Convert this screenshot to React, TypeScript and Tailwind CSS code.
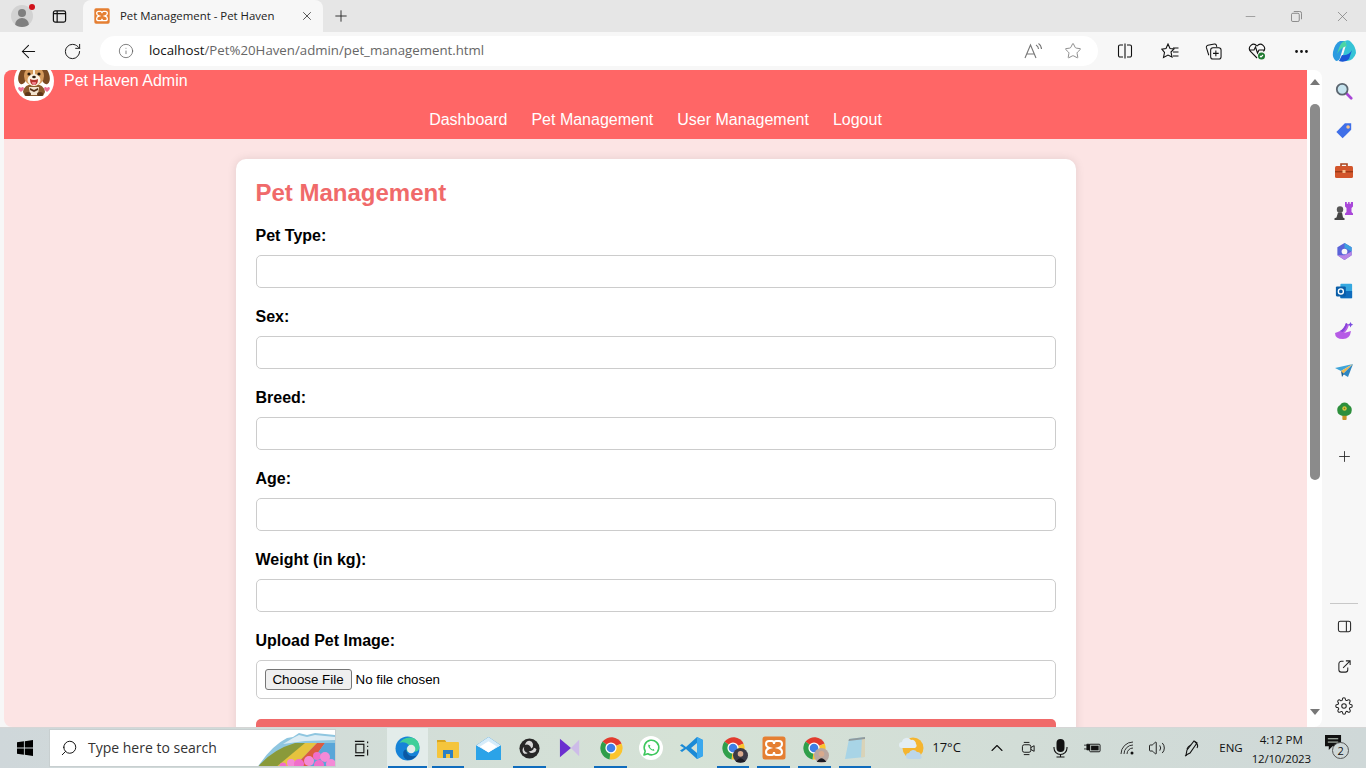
import React from "react";
import { ArrowLeft, RotateCw, Info, Star, X, Plus, Minus, Ellipsis, ChevronUp, Volume2, Search } from "lucide-react";

const ui = { fontFamily: '"Open Sans", "Noto Sans", sans-serif' };
const web = { fontFamily: '"Liberation Sans", Arial, sans-serif' };

function Dog() {
  return (
    <svg viewBox="0 0 40 40" className="w-10 h-10 shrink-0 -mt-[9px] rounded-full bg-white">
      <path d="M9 31 q1 -8 11 -8 q10 0 11 8 l-2 4 h-18z" fill="#8a5a2c" />
      <path d="M15 26 h10 l-1 8 h-8z" fill="#f2e3cf" />
      <ellipse cx="9" cy="15" rx="4.5" ry="8.5" fill="#7a4a22" transform="rotate(14 9 15)" />
      <ellipse cx="31" cy="15" rx="4.5" ry="8.5" fill="#7a4a22" transform="rotate(-14 31 15)" />
      <ellipse cx="20" cy="15" rx="10" ry="10" fill="#d59a5c" />
      <ellipse cx="20" cy="19" rx="6.5" ry="6" fill="#fbf1e2" />
      <path d="M19 6 h2 v8 h-2z" fill="#fbf1e2" />
      <circle cx="15" cy="13" r="1.6" fill="#2b1a0c" />
      <circle cx="25" cy="13" r="1.6" fill="#2b1a0c" />
      <ellipse cx="20" cy="16" rx="1.8" ry="1.3" fill="#2b1a0c" />
      <path d="M16 18 q4 2 8 0 q0 6 -4 6 q-4 0 -4 -6z" fill="#b5332e" />
      <path d="M18 21 h4 q0 3 -2 3 q-2 0 -2 -3z" fill="#ef7f8c" />
      <path d="M16 27 l4 2 l4 -2 v2 l-4 2 l-4 -2z" fill="#55301a" />
      <path d="M4 27 q1.5 -2 3 0 q1.5 -2 3 0 q0 2 -3 4 q-3 -2 -3 -4z" fill="#ee6f94" />
      <path d="M30 27 q1.5 -2 3 0 q1.5 -2 3 0 q0 2 -3 4 q-3 -2 -3 -4z" fill="#ee6f94" />
      <ellipse cx="14" cy="33" rx="3" ry="2" fill="#5d3619" />
      <ellipse cx="26" cy="33" rx="3" ry="2" fill="#5d3619" />
    </svg>
  );
}

function Xampp({ size }: { size: number }) {
  return (
    <svg viewBox="0 0 24 24" width={size} height={size}>
      <rect x="0.5" y="0.5" width="23" height="23" rx="2.5" fill="#e57f32" />
      <path d="M7 5 h3 q2 0 2 3 q0 -3 2 -3 h3 q3 0 3 3 q0 3 -3.5 4 q3.5 1 3.5 4 q0 3 -3 3 h-3 q-2 0 -2 -3 q0 3 -2 3 h-3 q-3 0 -3 -3 q0 -3 3.5 -4 q-3.5 -1 -3.5 -4 q0 -3 3 -3z" fill="none" stroke="#fff" strokeWidth="2" />
    </svg>
  );
}

function Chrome({ badge }: { badge?: string }) {
  return (
    <span className="relative block w-6 h-6">
      <svg viewBox="0 0 24 24" width="24" height="24">
        <path d="M12 12 L3.5 5.5 A11.5 11.5 0 0 1 22.6 7.5z" fill="#e23b2e" />
        <path d="M12 12 L22.6 7.5 A11.5 11.5 0 0 1 10.5 23.4z" fill="#fbc42d" />
        <path d="M12 12 L10.5 23.4 A11.5 11.5 0 0 1 3.5 5.5z" fill="#2f9e4a" />
        <circle cx="12" cy="12" r="5.6" fill="#fff" />
        <circle cx="12" cy="12" r="4.3" fill="#3f7fe6" />
      </svg>
      {badge && (
        <svg viewBox="0 0 14 14" width="15" height="15" className="absolute -right-[3px] -bottom-[3px]">
          <circle cx="7" cy="7" r="7" fill={badge} />
          <circle cx="7" cy="5.5" r="2.6" fill="#d9a98c" />
          <path d="M2.5 13 q4.5 -7 9 0z" fill="#1c1c24" />
        </svg>
      )}
    </span>
  );
}

function Field({ label }: { label: string }) {
  return (
    <div className="mb-5">
      <label className="block text-base leading-[18px] font-bold text-black mb-[10px]">{label}</label>
      <input type="text" className="block w-full h-[33px] bg-white border border-[#cccccc] rounded-[5px]" />
    </div>
  );
}

const sideColor = "w-11 h-10 flex items-center justify-center";

function Sidebar() {
  return (
    <aside className="w-11 shrink-0 flex flex-col items-center pt-px pb-[1px]">
      <div className={sideColor}>
        <svg viewBox="0 0 20 20" width="18" height="18"><path d="M12 12 L18 18" stroke="#a845d6" strokeWidth="3" strokeLinecap="round" /><circle cx="8" cy="8" r="6" fill="#c5e3ee" stroke="#5c6670" strokeWidth="2" /></svg>
      </div>
      <div className={sideColor}>
        <svg viewBox="0 0 20 20" width="18" height="18"><path d="M1.5 11 L11 1.5 h7 v7 L8.5 18z" fill="#3f6fe8" /><circle cx="14.5" cy="5.5" r="2" fill="#f6c28c" /></svg>
      </div>
      <div className={sideColor}>
        <svg viewBox="0 0 20 20" width="20" height="20"><path d="M7 5 V3 h6 v2" fill="none" stroke="#a8431d" strokeWidth="1.6" /><rect x="1" y="5" width="18" height="12" rx="1.5" fill="#d2552b" /><rect x="1" y="10" width="18" height="1.4" fill="#9c3a18" /><rect x="8.5" y="9" width="3" height="3" fill="#f5c08d" /></svg>
      </div>
      <div className={sideColor}>
        <svg viewBox="0 0 20 20" width="20" height="20"><path d="M11 1 h1.8 v1.8 h1.3 V1 h1.5 v1.8 h1.3 V1 H19 v4.5 l-1.5 1.5 v4 L19 12.5 v1.5 h-8 v-1.5 L12.5 11 V7 L11 5.5z" fill="#a947d9" /><circle cx="6" cy="8.5" r="3.2" fill="#565656" /><path d="M4 11.5 h4 l1 5 l1.5 .8 v1.7 H0.5 v-1.7 L2.5 16.5z" fill="#454545" /></svg>
      </div>
      <div className={sideColor}>
        <svg viewBox="0 0 20 20" width="19" height="19"><path d="M10 1 L17.5 5.5 V14 L10 19 L2.5 14 V5.5z" fill="#5a63d8" /><path d="M10 1 L17.5 5.5 V10 L10 6z" fill="#3da0e0" /><path d="M2.5 14 L10 19 L17.5 14 V10 L10 14z" fill="#b985e6" /><circle cx="10" cy="10" r="3" fill="#f7f7f7" /></svg>
      </div>
      <div className={sideColor}>
        <svg viewBox="0 0 20 20" width="18" height="18"><rect x="6" y="2" width="13" height="16" rx="1" fill="#35a8e0" /><rect x="6" y="10" width="13" height="8" fill="#0f6cbd" /><rect x="1" y="5" width="11" height="11" rx="1.2" fill="#0a5ea8" /><circle cx="6.5" cy="10.5" r="2.8" fill="none" stroke="#fff" strokeWidth="1.5" /></svg>
      </div>
      <div className={sideColor}>
        <svg viewBox="0 0 20 20" width="20" height="20"><path d="M1 12 q3 -1 5 -2 q4 -2 6 -8 l3 2 q-2 6 -5 8 l7 -2 q-1 8 -8 8 q-8 0 -8 -6z" fill="#b65ce6" /><path d="M6 10 q4 -2 6 -8 l1.5 1 q-2 6 -5 8z" fill="#8646d8" /><path d="M16.5 1 l.9 1.8 1.8 .9 -1.8 .9 -.9 1.8 -.9 -1.8 -1.8 -.9 1.8 -.9z" fill="#7b4de0" /></svg>
      </div>
      <div className={sideColor}>
        <svg viewBox="0 0 20 20" width="20" height="20"><path d="M1 7 L19 3 L7 10z" fill="#3fa4d8" /><path d="M19 3 L7 10 L9 13z" fill="#f0b74e" /><path d="M19 3 L9 13 L14 16z" fill="#2e86c1" /><path d="M7 10 L8 16 L10 13z" fill="#1e6091" /></svg>
      </div>
      <div className={sideColor}>
        <svg viewBox="0 0 20 22" width="17" height="20"><rect x="7.5" y="15" width="5" height="6.5" rx="1" fill="#c99526" /><path d="M10 1 q4 0 5 3 q4 2 3.5 6.5 q-.5 5.5 -5.5 6 H7 q-5 -.5 -5.5 -6 Q1 6 5 4 q1 -3 5 -3z" fill="#2d8f3c" /><circle cx="10" cy="8" r="2.6" fill="#d8c840" /><circle cx="10" cy="8" r="1" fill="#8a7a18" /></svg>
      </div>
      <div className="w-11 h-[44px] flex items-center justify-center pt-[6px]">
        <Plus size={17} strokeWidth={1.2} className="text-[#222]" />
      </div>
      <div className="mt-auto w-[28px] h-px bg-[#c8c8c8] mb-[2px]" />
      <div className={sideColor}>
        <svg viewBox="0 0 16 16" width="15" height="15" fill="none" stroke="#222" strokeWidth="1.1"><rect x="1.5" y="2.5" width="13" height="11" rx="2" /><path d="M10 2.5 v11" /></svg>
      </div>
      <div className={sideColor}>
        <svg viewBox="0 0 16 16" width="15" height="15" fill="none" stroke="#222" strokeWidth="1.1"><path d="M7 2.5 H4.5 a2.5 2.5 0 0 0 -2.5 2.5 v6.5 a2.5 2.5 0 0 0 2.5 2.5 H9 a2.5 2.5 0 0 0 2.5 -2.5 V9" /><path d="M6.5 9.5 L14 2 M9.5 2 H14 V6.5" /></svg>
      </div>
      <div className={sideColor}>
        <svg viewBox="0 0 24 24" width="18" height="18" fill="none" stroke="#222" strokeWidth="1.4"><circle cx="12" cy="12" r="3" /><path d="M19.4 15a1.65 1.65 0 0 0 .33 1.82l.06.06a2 2 0 1 1-2.83 2.83l-.06-.06a1.65 1.65 0 0 0-2.8 1.17V21a2 2 0 1 1-4 0v-.09a1.65 1.65 0 0 0-2.8-1.17l-.06.06a2 2 0 1 1-2.83-2.83l.06-.06a1.65 1.65 0 0 0-1.17-2.8H3a2 2 0 1 1 0-4h.09a1.65 1.65 0 0 0 1.17-2.8l-.06-.06a2 2 0 1 1 2.83-2.83l.06.06a1.65 1.65 0 0 0 2.8-1.17V3a2 2 0 1 1 4 0v.09a1.65 1.65 0 0 0 2.8 1.17l.06-.06a2 2 0 1 1 2.83 2.83l-.06.06a1.65 1.65 0 0 0 1.17 2.8H21a2 2 0 1 1 0 4h-.09a1.65 1.65 0 0 0-1.51 1z" /></svg>
      </div>
    </aside>
  );
}

function Tb({ children, bar, active }: { children: React.ReactNode; bar?: boolean; active?: boolean }) {
  return (
    <div className={active ? "relative w-[40.7px] shrink-0 h-10 flex items-center justify-center bg-[#e3ecea]" : "relative w-[40.7px] shrink-0 h-10 flex items-center justify-center"}>
      {children}
      {bar && <span className={active ? "absolute bottom-0 left-px right-px h-[2px] bg-[#0f6cbd]" : "absolute bottom-0 left-1 right-1 h-[2px] bg-[#0f6cbd]"} />}
    </div>
  );
}

function Taskbar() {
  return (
    <footer style={ui} className="h-10 shrink-0 flex items-center bg-gradient-to-r from-[#cfd7da] via-[#d5e2d6] to-[#cfd8d8] text-[#111]">
      <div className="w-[49px] shrink-0 h-10 flex items-center justify-center">
        <svg viewBox="0 0 16 16" width="16" height="16" fill="#000"><path d="M0 2.3 L6.9 1.3 V7.5 H0z M7.8 1.2 L16 0 V7.5 H7.8z M0 8.4 H6.9 V14.7 L0 13.7z M7.8 8.4 H16 V16 L7.8 14.8z" /></svg>
      </div>
      <div className="relative w-[287px] shrink-0 h-[38px] bg-white border border-[#c8cfd0] flex items-center overflow-hidden">
        <Search size={18} strokeWidth={1.3} className="ml-[10px] -scale-x-100" />
        <span className="ml-[10px] text-sm leading-5 text-[#333]">Type here to search</span>
        <svg viewBox="0 0 80 38" width="80" height="38" className="absolute right-0 top-0">
          <path d="M2 38 Q16 16 32 8 L38 7 L44 3 L52 5 L60 3 L80 5 V38z" fill="#8fc6e0" />
          <path d="M28 14 L38 8 L44 5 L52 7 L60 5 L80 7 V10 L50 11z" fill="#dcecf4" />
          <path d="M2 38 Q16 20 40 13 L52 13 L24 38z" fill="#8a9a3a" />
          <path d="M20 38 L50 13 L62 13 L38 38z" fill="#e6c33e" />
          <path d="M38 38 L62 13 L70 13 L52 38z" fill="#dd5c3f" />
          <path d="M52 38 L70 13 L80 13 V38z" fill="#5aa6d8" />
          <circle cx="28" cy="36" r="3.5" fill="#f06ecb" /><circle cx="36" cy="33" r="4" fill="#f48ad7" /><circle cx="44" cy="34" r="5" fill="#f06ecb" /><circle cx="54" cy="31" r="5" fill="#f48ad7" /><circle cx="62" cy="26" r="4" fill="#f06ecb" /><circle cx="70" cy="27" r="5" fill="#f48ad7" /><circle cx="64" cy="35" r="5" fill="#f06ecb" /><circle cx="76" cy="34" r="5" fill="#f48ad7" />
        </svg>
      </div>
      <div className="w-[51px] shrink-0 h-10 flex items-center justify-center">
        <svg viewBox="0 0 18 18" width="17" height="17" fill="none" stroke="#111" strokeWidth="1.2"><path d="M2 1.5 H12 M2 16.5 H12" /><rect x="3" y="4.5" width="8.5" height="9" /><path d="M15.5 1.5 v2 M15.5 6 v1.5 M15.5 10 v6.5" /></svg>
      </div>
      <Tb bar active>
        <svg viewBox="0 0 24 24" width="25" height="25"><circle cx="12" cy="12" r="11.5" fill="#1683d8" /><path d="M3 8 Q8 .5 16 1.5 Q23 3 23.5 11 Q23 15 18 15 L11 15 Q10 11 14 10 Q12 6 7 6 Q4 6 3 8z" fill="#3fcf9a" /><path d="M11 13 Q11 19 17 19.5 Q20 19.5 21 18.5 Q18 23 12 23 L12 23 Q7 21 8 15 Q9 13 11 13z" fill="#0c59a4" /><circle cx="15.5" cy="12.5" r="4" fill="#e3ecea" /></svg>
      </Tb>
      <Tb bar>
        <svg viewBox="0 0 24 24" width="24" height="24"><path d="M1 4 h8 l2 3 H1z" fill="#d9a520" /><rect x="1" y="6" width="22" height="16" rx="1" fill="#f5c53c" /><path d="M7 22 v-8 h10 v8 h-3 v-4 h-4 v4z" fill="#2b80c4" /></svg>
      </Tb>
      <Tb>
        <svg viewBox="0 0 24 24" width="25" height="25"><path d="M0 9 L12 1 L24 9 V23 H0z" fill="#1681cf" /><path d="M0 9 L12 1 L24 9 L12 16z" fill="#d6ecfa" /><path d="M4 10 L12 5 L20 10 L12 16z" fill="#fff" /><path d="M0 9 L12 16 L24 9 V23 H0z" fill="#2ba3e8" /></svg>
      </Tb>
      <Tb bar>
        <svg viewBox="0 0 24 24" width="21" height="21"><circle cx="12" cy="12" r="11.5" fill="#272727" /><path d="M12 3 a5 5 0 0 1 2 9 a5 5 0 0 0 -7 -4 a5 5 0 0 1 5 -5z M20 13 a5 5 0 0 1 -9 2 a5 5 0 0 0 6 -4 a5 5 0 0 1 3 2z M6 18 a5 5 0 0 1 0 -8 a5 5 0 0 0 4 7 a5 5 0 0 1 -4 1z" fill="#d8d8d8" /></svg>
      </Tb>
      <Tb>
        <svg viewBox="0 0 24 24" width="22" height="22"><path d="M1 2 L13 12 L1 22z" fill="#6b2fcf" /><path d="M13 12 L22 3 V21z" fill="#cdbce8" /></svg>
      </Tb>
      <Tb bar>
        <Chrome />
      </Tb>
      <Tb>
        <svg viewBox="0 0 24 24" width="24" height="24"><circle cx="12" cy="12" r="12" fill="#fff" /><path d="M5 19 L6.2 15.2 A7.3 7.3 0 1 1 8.8 17.8z" fill="none" stroke="#3ec75d" strokeWidth="1.6" strokeLinejoin="round" /><path d="M9.5 8.5 q-1 2 1.5 4.5 q2.5 2.5 4.5 1.5 l-.8 -1.6 l-1.4 .5 q-2 -1 -2.6 -2.7 l.7 -1.2z" fill="#3ec75d" /></svg>
      </Tb>
      <Tb>
        <svg viewBox="0 0 24 24" width="24" height="24"><path d="M17 1 L23 4 V20 L17 23 L6 13 L2 16 L0 14.5 L4 12 L0 9.5 L2 8 L6 11z M17 7 L11 12 L17 17z" fill="#1b8ad6" /><path d="M17 1 L23 4 V20 L17 23z" fill="#3aa8ee" /></svg>
      </Tb>
      <Tb bar><Chrome badge="#3c3a46" /></Tb>
      <Tb bar><Xampp size={24} /></Tb>
      <Tb bar><Chrome badge="#b9a7a0" /></Tb>
      <Tb bar>
        <svg viewBox="0 0 24 24" width="24" height="24"><path d="M6 3 L22 1 V21 L2 23z" fill="#a8d4e6" /><path d="M19 1.5 L22 1 V21 L18 21.5z" fill="#d9d3b8" /><path d="M6 3 L22 1 V3 L5.5 5z" fill="#8f9a9e" /></svg>
      </Tb>
      <div className="w-[24px] shrink-0" />
      <svg viewBox="0 0 26 26" width="26" height="26" className="shrink-0"><circle cx="14" cy="13" r="10.5" fill="#f5b52f" /><path d="M3 13 a3 3 0 0 1 0 -6 a5 5 0 0 1 9 -2 a4 4 0 0 1 5 4 a2.5 2.5 0 0 1 -1 4z" fill="#e3edf4" /><path d="M10 24 a3 3 0 0 1 0 -6 a4.5 4.5 0 0 1 8 -1 a3.5 3.5 0 0 1 4 3.5 a2.5 2.5 0 0 1 -.5 3.5z" fill="#bcd6ea" /></svg>
      <span className="ml-[7px] w-[36px] shrink-0 text-[13px] whitespace-nowrap">17°C</span>
      <div className="w-[19px] shrink-0" />
      <ChevronUp size={20} strokeWidth={1.3} className="shrink-0" />
      <div className="w-[14px] shrink-0" />
      <svg viewBox="0 0 16 16" width="15" height="17" fill="none" stroke="#111" strokeWidth="1" className="shrink-0"><rect x="1.5" y="4" width="9" height="8" rx="2" /><path d="M10.5 7 L14 5 V11 L10.5 9 M3 1.5 H9 M3 14.5 H9" /></svg>
      <div className="w-[16px] shrink-0" />
      <svg viewBox="0 0 17 20" width="17" height="20" className="shrink-0"><rect x="4.5" y="1" width="8" height="13" rx="4" fill="#111" /><path d="M2 9 v1 a6.5 6.5 0 0 0 13 0 V9 M8.5 16.5 V19 M4.5 19 H12.5" fill="none" stroke="#111" strokeWidth="1.1" /></svg>
      <div className="w-[15px] shrink-0" />
      <svg viewBox="0 0 18 14" width="17" height="14" className="shrink-0"><path d="M0 4 H3 M0 8 H3 M3 3 H6 V9 H3z" stroke="#111" fill="#111" strokeWidth=".8" /><rect x="6" y="3" width="11" height="8" rx="1" fill="none" stroke="#111" /><rect x="7.5" y="4.5" width="8" height="5" fill="#111" /></svg>
      <div className="w-[18px] shrink-0" />
      <svg viewBox="0 0 16 16" width="16" height="16" fill="none" stroke="#333" strokeWidth="1" className="shrink-0"><path d="M2 14 A12 12 0 0 1 14 2 M5 14 A9 9 0 0 1 14 5 M8 14 A6 6 0 0 1 14 8" /><circle cx="13" cy="13" r="1.5" fill="#111" stroke="none" /></svg>
      <div className="w-[13px] shrink-0" />
      <Volume2 size={18} strokeWidth={1.2} className="shrink-0" />
      <div className="w-[17px] shrink-0" />
      <svg viewBox="0 0 18 18" width="18" height="18" fill="none" stroke="#111" strokeWidth="1.1" className="shrink-0"><path d="M3 16 L4 11 L11 2 L14 4 L7 14z M2 17 l2 -1" /><path d="M12 3 q4 3 2 6 M8 6 q-3 1 -4 4" /></svg>
      <div className="w-[18px] shrink-0" />
      <span className="text-[11.5px] w-[28px] shrink-0">ENG</span>
      <div className="w-[68px] shrink-0 flex flex-col items-center text-[11.5px] leading-[19px] mt-[1px] whitespace-nowrap">
        <span>4:12 PM</span>
        <span className="tracking-[-0.2px]">12/10/2023</span>
      </div>
      <div className="relative ml-[6px] w-7 h-7 shrink-0">
        <svg viewBox="0 0 18 18" width="17" height="17" className="absolute left-[4px] top-[1px]"><path d="M0 0 H17 V12 H8 L4 16 V12 H0z" fill="#111" /><path d="M3 4 H14 M3 7.5 H14" stroke="#d5e2d6" /></svg>
        <span className="absolute left-[11px] top-[8px] w-[17px] h-[17px] rounded-full border border-[#555] bg-[#cfd8d8] flex items-center justify-center text-[11px] leading-none">2</span>
      </div>
    </footer>
  );
}

export default function App() {
  return (
    <div style={ui} className="w-[1366px] h-[768px] overflow-hidden flex flex-col bg-[#f7f7f7]">
      {/* tab strip */}
      <div className="h-8 shrink-0 flex bg-[#e6e6e6] items-center">
        <div className="w-[83px] h-8 flex items-center">
          <div className="relative ml-[11px] w-[22px] h-[22px] rounded-full bg-[#d2d2d2] overflow-hidden shrink-0">
            <span className="absolute left-[7px] top-[4px] w-2 h-2 rounded-full bg-[#7f7f7f]" />
            <span className="absolute left-[4px] top-[13px] w-[14px] h-[10px] rounded-t-full bg-[#7f7f7f]" />
          </div>
          <span className="relative -top-[9px] -ml-[4px] w-[6px] h-[6px] rounded-full bg-[#d0121b] shrink-0" />
          <svg viewBox="0 0 16 16" width="15" height="15" fill="none" stroke="#111" strokeWidth="1.3" className="ml-[17px] shrink-0"><rect x="1.5" y="2" width="13" height="12" rx="2" /><path d="M5.5 2 v12 M1.5 5 H14.5" /></svg>
        </div>
        <div className="w-[240px] h-8 bg-[#f7f7f7] rounded-t-lg flex items-center pl-[11px] pr-[9px]">
          <Xampp size={16} />
          <span className="ml-[10px] text-[11.4px] text-[#222] flex-1 whitespace-nowrap">Pet Management - Pet Haven</span>
          <X size={14} strokeWidth={1.4} className="text-[#333]" />
        </div>
        <Plus size={18} strokeWidth={1.2} className="ml-[9px] text-[#222]" />
        <div className="ml-auto flex items-center text-[#777]">
          <Minus size={15} strokeWidth={1} className="mr-[33px]" />
          <svg viewBox="0 0 12 12" width="11" height="11" fill="none" stroke="#777" strokeWidth=".9" className="mr-[32px]"><rect x=".5" y="2.5" width="8.5" height="9" rx="1.5" /><path d="M3 .5 H9.5 a2 2 0 0 1 2 2 V9" /></svg>
          <X size={17} strokeWidth={1} className="mr-[15px]" />
        </div>
      </div>
      {/* toolbar */}
      <div className="h-[38px] shrink-0 flex items-center bg-[#f7f7f7]">
        <ArrowLeft size={21} strokeWidth={1.2} className="ml-[18px] text-[#111]" />
        <RotateCw size={19} strokeWidth={1.2} className="ml-[24px] text-[#111]" />
        <div className="ml-[18px] w-[998px] h-[30px] rounded-full bg-white flex items-center pl-[18px] pr-[16px]">
          <Info size={16} strokeWidth={1.1} className="text-[#555]" />
          <span className="ml-[15px] text-[13.25px] text-[#666] whitespace-nowrap"><span className="text-[#111]">localhost</span>/Pet%20Haven/admin/pet_management.html</span>
          <svg viewBox="0 0 18 16" width="18" height="16" fill="none" stroke="#777" strokeWidth="1.1" className="ml-auto"><path d="M1 15 L6.5 2 L12 15 M3 11 H10" /><path d="M12 2 q2.5 1.5 2.5 4 M14.5 .5 q3 2 3 5.5" /></svg>
          <Star size={18} strokeWidth={1.1} className="ml-[22px] text-[#777]" />
        </div>
        <svg viewBox="0 0 16 16" width="16" height="16" fill="none" stroke="#111" strokeWidth="1.1" className="ml-[19px]"><path d="M6 2 H3 a1.5 1.5 0 0 0 -1.5 1.5 v9 A1.5 1.5 0 0 0 3 14 H6 M10 2 H13 a1.5 1.5 0 0 1 1.5 1.5 v9 a1.5 1.5 0 0 1 -1.5 1.5 H10 M8 .5 V15.5" /></svg>
        <svg viewBox="0 0 18 16" width="18" height="16" fill="none" stroke="#111" strokeWidth="1.1" className="ml-[28px]"><path d="M7 1 L9 5.5 L13 6 L10 9 L11 14 L7 12 L2.5 14.5 L3.5 9.5 L.8 6.2 L5 5.5z" /><path d="M12 5 H17.5 M12 9 H17.5 M12 13 H17.5" /></svg>
        <svg viewBox="0 0 18 18" width="17" height="17" fill="none" stroke="#111" strokeWidth="1.1" className="ml-[26px]"><path d="M4 13 L1.5 5 a2 2 0 0 1 1.5 -2.5 L10 1 a2 2 0 0 1 2 1.2 L12.5 4" /><rect x="6" y="5" width="11" height="12" rx="2.5" /><path d="M11.5 8 v6 M8.5 11 h6" /></svg>
        <svg viewBox="0 0 18 18" width="18" height="18" fill="none" stroke="#111" strokeWidth="1.1" className="ml-[26px]"><path d="M9 16 L2.5 9.5 C-1 5 5 -.5 9 4 C13 -.5 19 5 15.5 9.5 M1 8 H6 L7.5 5 L9.5 11 L11 8 H17" /><circle cx="13.5" cy="14" r="3.5" fill="#1f7a30" stroke="none" /><path d="M12 14 l1 1 l2 -2" stroke="#fff" /></svg>
        <Ellipsis size={17} strokeWidth={2} className="ml-[27px] text-[#111]" />
        <svg viewBox="0 0 24 24" width="24" height="24" className="ml-[22px]"><path d="M8 2 H13 L8 19 Q7 22 4 22 Q0 19 1 13 Q3 4 8 2z" fill="#2c9be0" /><path d="M13 2 Q17 0 19 3 Q24 8 24 14 Q22 21 15 22 H7 Q10 20 11 16 L14 6z" fill="#35c3d6" /><path d="M7 22 Q13 24 17 20 L20 11 Q17 17 10 16z" fill="#1a56d6" /><path d="M13 2 Q9 3 7 9 L5 15 Q9 8 15 7z" fill="#4bd5a5" /></svg>
      </div>
      {/* middle */}
      <div className="flex-1 min-h-0 flex pl-1 border-b border-[#d6d6d6]">
        <div className="flex-1 min-w-0 flex rounded-lg overflow-hidden">
          <main style={web} className="flex-1 min-w-0 bg-[#fce4e4] overflow-hidden">
            <header className="h-[69px] bg-[#ff6666] text-white overflow-hidden">
              <div className="h-[31px] flex pl-[10px]">
                <Dog />
                <span className="ml-[10px] text-base leading-[21px] whitespace-nowrap">Pet Haven Admin</span>
              </div>
              <nav className="mt-[10px] flex justify-center gap-6 text-base leading-[18px]">
                <a>Dashboard</a>
                <a>Pet Management</a>
                <a>User Management</a>
                <a>Logout</a>
              </nav>
            </header>
            <section className="w-[840px] mx-auto mt-5 bg-white rounded-[10px] p-5 shadow-[0_0_10px_rgba(0,0,0,0.1)]">
              <h1 className="text-2xl leading-[27px] font-bold text-[#f06a6a] mb-[21px]">Pet Management</h1>
              <Field label="Pet Type:" />
              <Field label="Sex:" />
              <Field label="Breed:" />
              <Field label="Age:" />
              <Field label="Weight (in kg):" />
              <div className="mb-5">
                <label className="block text-base leading-[18px] font-bold text-black mb-[10px]">Upload Pet Image:</label>
                <div className="w-full h-[39px] border border-[#cccccc] rounded-[5px] flex items-center pl-2 text-[13.33px] text-black">
                  <button className="h-[21px] w-[87px] rounded-[3px] border border-[#767676] bg-[#efefef] text-[13.33px] leading-none">Choose File</button>
                  <span className="ml-1">No file chosen</span>
                </div>
              </div>
              <div className="h-10 rounded-[5px] bg-[#f06a6a]" />
            </section>
          </main>
          <div className="w-[15px] shrink-0 bg-white flex flex-col items-center">
            <svg viewBox="0 0 10 6" width="10" height="6" className="mt-[9px]"><path d="M0 6 L5 0 L10 6z" fill="#777" /></svg>
            <div className="mt-[19px] w-[10px] h-[376px] bg-[#8b8b8b] rounded-full" />
            <svg viewBox="0 0 10 6" width="10" height="6" className="mt-auto mb-[12px]"><path d="M0 0 L5 6 L10 0z" fill="#777" /></svg>
          </div>
        </div>
        <Sidebar />
      </div>
      <Taskbar />
    </div>
  );
}
